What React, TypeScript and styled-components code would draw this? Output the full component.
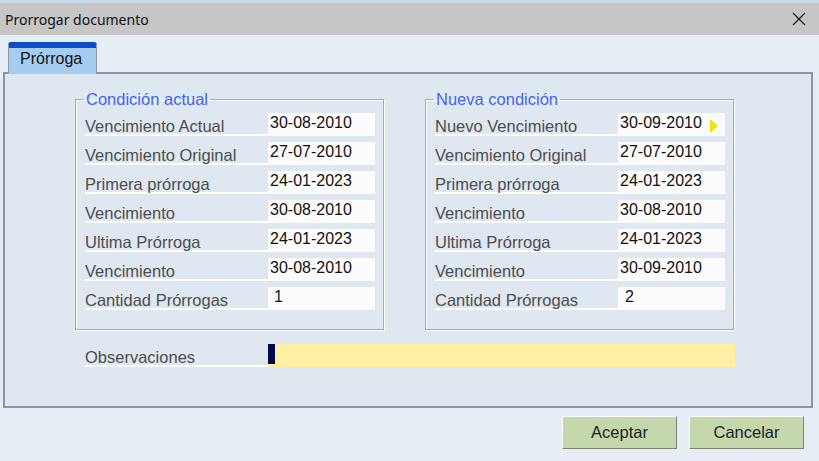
import styled, { createGlobalStyle } from 'styled-components';

const GlobalStyle = createGlobalStyle`
  html, body {
    margin: 0;
    padding: 0;
  }
  body {
    width: 819px;
    height: 461px;
    overflow: hidden;
    background: #e7edf5;
    font-family: "Liberation Sans", Arial, sans-serif;
  }
`;

const Window = styled.div`
  width: 819px;
  height: 461px;
  display: flex;
  flex-direction: column;
  background: #e7edf5;
`;

const TitleBar = styled.div`
  height: 32px;
  border-top: 3px solid #c9d9ea;
  background: #c6c6c6;
  display: flex;
  align-items: center;
  justify-content: space-between;
  padding: 0 12px 0 5px;
`;

const Title = styled.span`
  font-family: "Noto Sans", "Open Sans", sans-serif;
  font-size: 14px;
  color: #111;
`;

const CloseButton = styled.button`
  border: 0;
  background: transparent;
  padding: 0;
  width: 16px;
  height: 16px;
  display: flex;
  align-items: center;
  justify-content: center;
`;

const Body = styled.div`
  padding: 7px 6px 0 3px;
`;

const TabStrip = styled.div`
  display: flex;
  padding-left: 5px;
`;

const Tab = styled.div`
  position: relative;
  z-index: 1;
  box-sizing: border-box;
  width: 89px;
  height: 32px;
  margin-bottom: -2px;
  border-top: 6px solid #0b4fc8;
  border-left: 1px solid #8f979f;
  border-right: 1px solid #8f979f;
  border-radius: 3px 3px 0 0;
  background: #a5cdef;
  padding-left: 11px;
  font-size: 16px;
  line-height: 22px;
  color: #111;
`;

const Panel = styled.div`
  box-sizing: border-box;
  width: 810px;
  height: 336px;
  border: 2px solid #8d969e;
  background: #dfe8f1;
  padding: 16px 0 0 70px;
`;

const GroupsRow = styled.div`
  display: flex;
  gap: 41px;
`;

const Group = styled.fieldset`
  box-sizing: border-box;
  width: 308px;
  margin: 0;
  padding: 4px 8px 19px 9px;
  border: 1px solid #a3aab1;
  box-shadow: inset 1px 1px 0 #ffffff, 1px 1px 0 #ffffff;
`;

const Legend = styled.legend`
  margin-left: -1px;
  padding: 0 2px;
  font-size: 16.5px;
  line-height: 19px;
  color: #4163f6;
`;

const Rows = styled.div`
  display: flex;
  flex-direction: column;
  gap: 6px;
`;

const Row = styled.div`
  display: flex;
  height: 23px;
`;

const Label = styled.div`
  box-sizing: border-box;
  width: 183px;
  height: 23px;
  border-bottom: 2px solid #ffffff;
  padding-top: 5px;
  font-size: 16.5px;
  line-height: 17px;
  color: #4d4d4d;
  white-space: nowrap;
`;

const Value = styled.div<{ $indent?: number }>`
  box-sizing: border-box;
  width: 107px;
  height: 23px;
  background: #fbfbfb;
  display: flex;
  align-items: flex-start;
  justify-content: space-between;
  padding: 0 7px 0 ${({ $indent }) => $indent ?? 2}px;
  font-size: 16px;
  line-height: 20px;
  color: #111;
`;

const Arrow = styled.span`
  width: 0;
  height: 0;
  margin-top: 6px;
  border-top: 7px solid transparent;
  border-bottom: 7px solid transparent;
  border-left: 8px solid #f2e200;
`;

const ObsRow = styled.div`
  display: flex;
  height: 23px;
  margin: 14px 0 0 10px;
`;

const ObsField = styled.div`
  width: 467px;
  height: 23px;
  background: #fff0a3;
`;

const Cursor = styled.span`
  display: block;
  width: 7px;
  height: 20px;
  background: #000a4a;
`;

const Footer = styled.div`
  display: flex;
  justify-content: flex-end;
  gap: 12px;
  padding: 8px 15px 0 0;
`;

const Button = styled.button`
  box-sizing: border-box;
  width: 115px;
  height: 33px;
  background: #c4d8ab;
  border: 1px solid;
  border-color: #ffffff #7d8478 #7d8478 #ffffff;
  font-family: "Liberation Sans", Arial, sans-serif;
  font-size: 16.5px;
  color: #1c1c2c;
`;

type Field = { label: string; value: string; indent?: number; arrow?: boolean };

const actual: Field[] = [
  { label: 'Vencimiento Actual', value: '30-08-2010' },
  { label: 'Vencimiento Original', value: '27-07-2010' },
  { label: 'Primera prórroga', value: '24-01-2023' },
  { label: 'Vencimiento', value: '30-08-2010' },
  { label: 'Ultima Prórroga', value: '24-01-2023' },
  { label: 'Vencimiento', value: '30-08-2010' },
  { label: 'Cantidad Prórrogas', value: '1', indent: 6 },
];

const nueva: Field[] = [
  { label: 'Nuevo Vencimiento', value: '30-09-2010', arrow: true },
  { label: 'Vencimiento Original', value: '27-07-2010' },
  { label: 'Primera prórroga', value: '24-01-2023' },
  { label: 'Vencimiento', value: '30-08-2010' },
  { label: 'Ultima Prórroga', value: '24-01-2023' },
  { label: 'Vencimiento', value: '30-09-2010' },
  { label: 'Cantidad Prórrogas', value: '2', indent: 7 },
];

function FieldGroup({ title, fields }: { title: string; fields: Field[] }) {
  return (
    <Group>
      <Legend>{title}</Legend>
      <Rows>
        {fields.map((f, i) => (
          <Row key={i}>
            <Label>{f.label}</Label>
            <Value $indent={f.indent}>
              <span>{f.value}</span>
              {f.arrow && <Arrow />}
            </Value>
          </Row>
        ))}
      </Rows>
    </Group>
  );
}

export default function App() {
  return (
    <Window>
      <GlobalStyle />
      <TitleBar>
        <Title>Prorrogar documento</Title>
        <CloseButton aria-label="Cerrar">
          <svg width="14" height="14" viewBox="0 0 14 14">
            <path d="M1 1 L13 13 M13 1 L1 13" stroke="#1a1a1a" strokeWidth="1.2" fill="none" />
          </svg>
        </CloseButton>
      </TitleBar>
      <Body>
        <TabStrip>
          <Tab>Prórroga</Tab>
        </TabStrip>
        <Panel>
          <GroupsRow>
            <FieldGroup title="Condición actual" fields={actual} />
            <FieldGroup title="Nueva condición" fields={nueva} />
          </GroupsRow>
          <ObsRow>
            <Label>Observaciones</Label>
            <ObsField>
              <Cursor />
            </ObsField>
          </ObsRow>
        </Panel>
      </Body>
      <Footer>
        <Button>Aceptar</Button>
        <Button>Cancelar</Button>
      </Footer>
    </Window>
  );
}
